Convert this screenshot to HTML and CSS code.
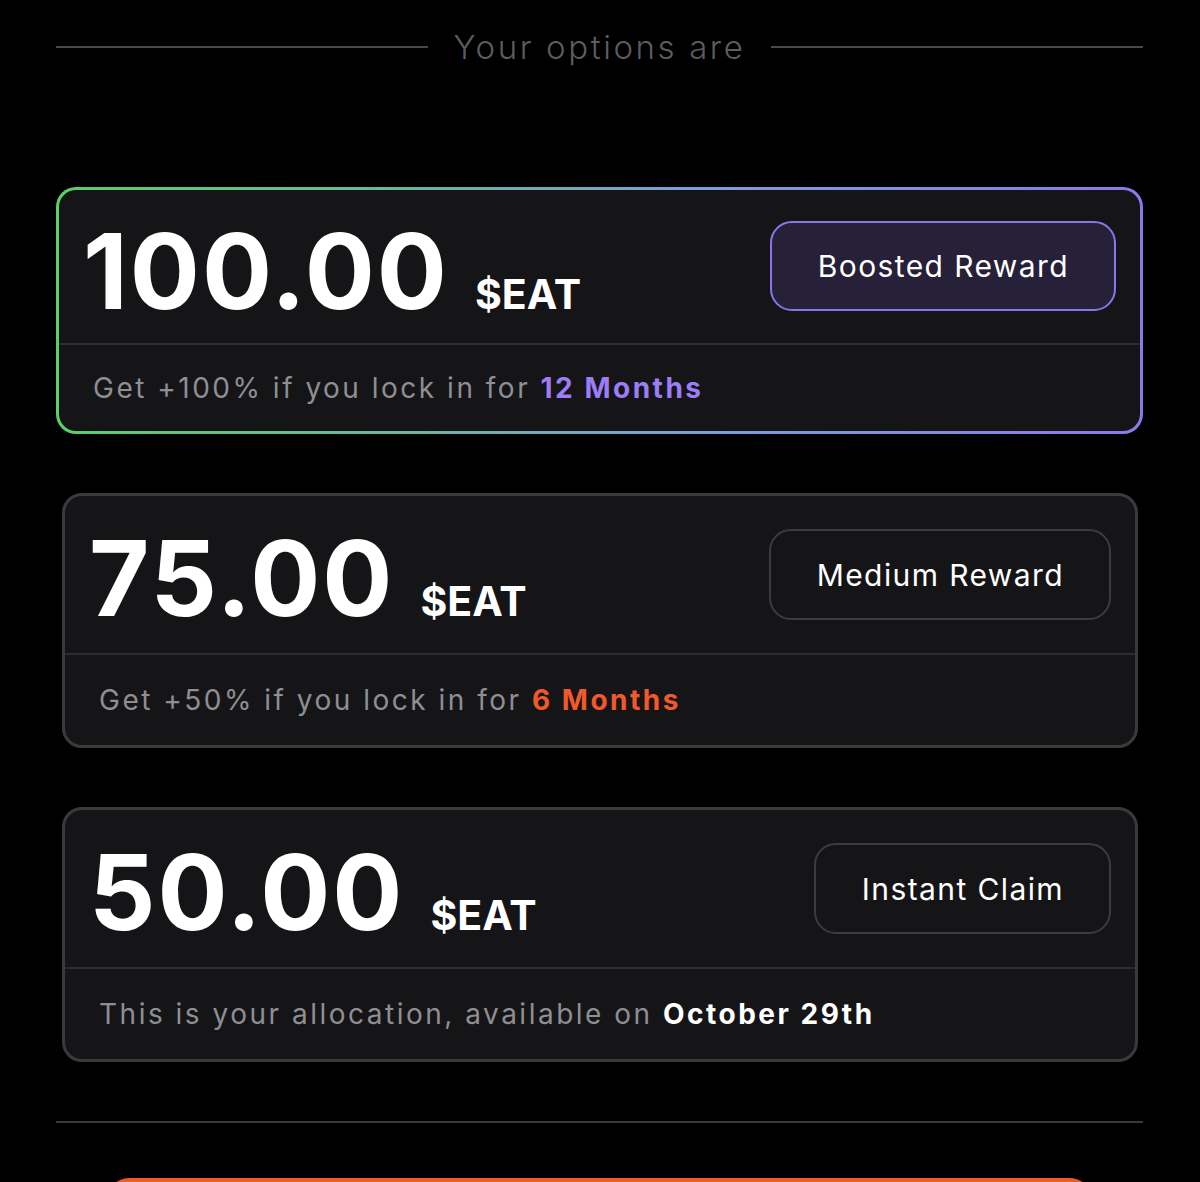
FILE: index.html
```html
<!DOCTYPE html>
<html lang="en">
<head>
    <meta charset="UTF-8">
    <meta name="viewport" content="width=device-width, initial-scale=1.0">
    <title>Claim $EAT</title>
    <link rel="stylesheet" href="styles.css">
</head>
<body>
    <main class="options">
        <div class="options-title">
            <span class="rule"></span>
            <h2>Your options are</h2>
            <span class="rule"></span>
        </div>

        <div class="option option-boosted">
            <div class="option-top">
                <div class="amount">
                    <span class="amount-value">100.00</span>
                    <span class="amount-unit">$EAT</span>
                </div>
                <button class="tag tag-boosted">Boosted Reward</button>
            </div>
            <div class="option-note">Get +100% if you lock in for <strong class="hl-purple">12 Months</strong></div>
        </div>

        <div class="option">
            <div class="option-top">
                <div class="amount">
                    <span class="amount-value">75.00</span>
                    <span class="amount-unit">$EAT</span>
                </div>
                <button class="tag">Medium Reward</button>
            </div>
            <div class="option-note">Get +50% if you lock in for <strong class="hl-orange">6 Months</strong></div>
        </div>

        <div class="option">
            <div class="option-top">
                <div class="amount">
                    <span class="amount-value">50.00</span>
                    <span class="amount-unit">$EAT</span>
                </div>
                <button class="tag">Instant Claim</button>
            </div>
            <div class="option-note">This is your allocation, available on <strong class="hl-white">October 29th</strong></div>
        </div>

        <hr class="divider">

        <button class="claim-button"></button>
    </main>
</body>
</html>
```

FILE: styles.css
```css
body {
    margin: 0;
    background-color: #000;
    font-family: Inter, "Noto Sans", sans-serif;
    color: #fff;
}

.options {
    padding: 27px 57px 0 56px;
}

.options-title {
    display: flex;
    align-items: center;
    gap: 25px;
    height: 40px;
}

.options-title h2 {
    margin: 0;
    font-size: 33px;
    font-weight: 300;
    line-height: 40px;
    letter-spacing: 2.6px;
    color: #5c5c5e;
    white-space: nowrap;
}

.rule {
    flex: 1;
    height: 2px;
    background-color: #48484a;
}

.option {
    margin: 59px 5px 0 6px;
    border: 3px solid #3a3a3c;
    border-radius: 20px;
    background-color: #151518;
}

.option-boosted {
    margin: 120px 0 0 0;
    border-color: transparent;
    background:
        linear-gradient(#151518, #151518) padding-box,
        linear-gradient(90deg, #5ccf68 0%, #6fb2a6 35%, #7a9fd8 60%, #8c78ea 100%) border-box;
}

.option-top {
    display: flex;
    justify-content: space-between;
    align-items: flex-start;
    box-sizing: border-box;
    height: 159px;
    padding: 30px 24px 0 24px;
    border-bottom: 2px solid #2d2d30;
}

.option-boosted .option-top {
    height: 155px;
    padding-top: 29px;
}

.amount {
    display: flex;
    align-items: baseline;
    gap: 26px;
}

.amount-value {
    font-size: 104px;
    font-weight: 700;
    line-height: 1;
    letter-spacing: 2px;
}

.amount-unit {
    font-size: 41px;
    font-weight: 700;
}

.tag {
    margin-top: 3px;
    height: 91px;
    padding: 0 45px 0 46px;
    border: 2px solid #3c3c3f;
    border-radius: 22px;
    background-color: #151518;
    color: #fff;
    font-family: Inter, "Noto Sans", sans-serif;
    font-size: 30px;
    font-weight: 400;
    letter-spacing: 1.4px;
}

.tag-boosted {
    margin-top: 2px;
    height: 90px;
    border-color: #8a76e8;
    background-color: #262038;
}

.option-note {
    display: flex;
    align-items: center;
    height: 90px;
    padding-left: 34px;
    font-size: 28px;
    letter-spacing: 2.5px;
    color: #8e8e93;
    white-space: pre;
}

.option-boosted .option-note {
    height: 86px;
}

.option-note strong {
    font-weight: 700;
}

.hl-purple {
    color: #9c7df6;
}

.hl-orange {
    color: #f05a2a;
}

.hl-white {
    color: #fff;
}

.divider {
    margin: 59px 0 0 0;
    height: 2px;
    border: none;
    background-color: #3a3a3c;
}

.claim-button {
    display: block;
    width: calc(100% - 102px);
    height: 100px;
    margin: 55px 51px 0 51px;
    border: none;
    border-radius: 22px;
    background-color: #ef5a2b;
}
```
